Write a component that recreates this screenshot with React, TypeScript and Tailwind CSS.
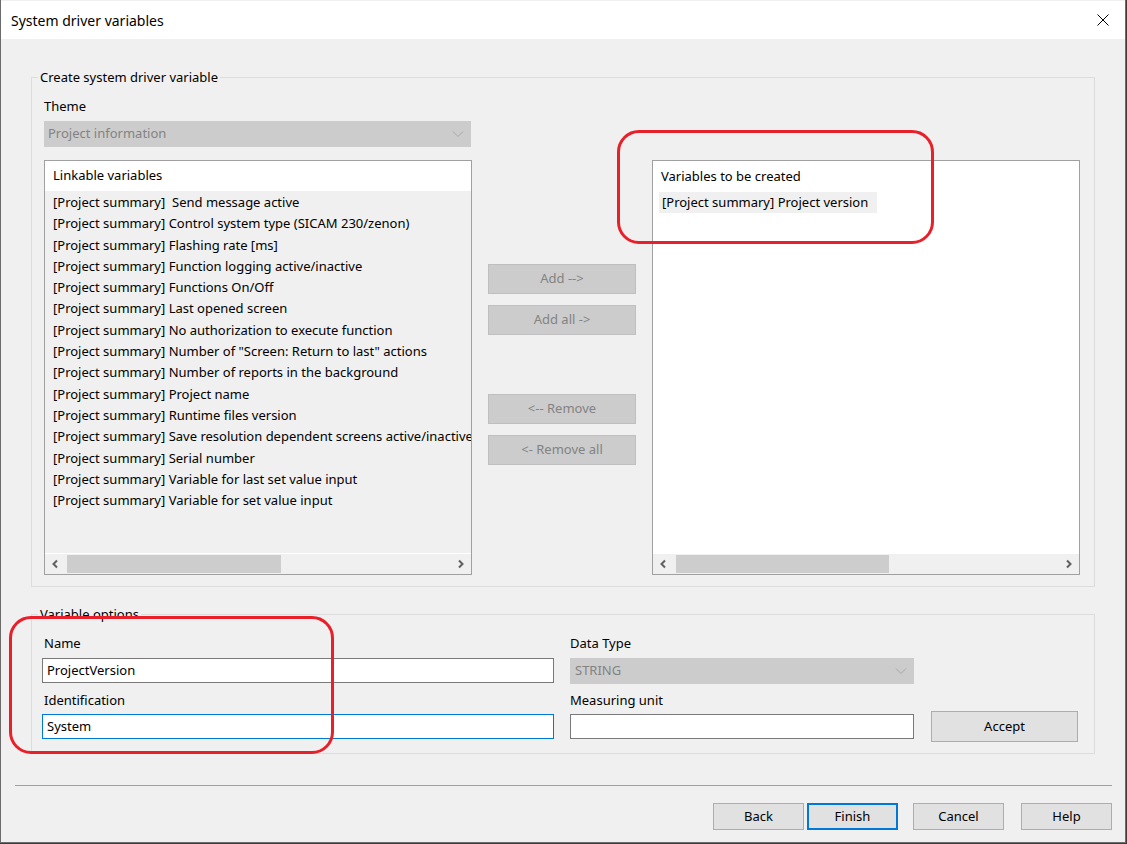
import React from "react";

const linkable = [
  "[Project summary]  Send message active",
  "[Project summary] Control system type (SICAM 230/zenon)",
  "[Project summary] Flashing rate [ms]",
  "[Project summary] Function logging active/inactive",
  "[Project summary] Functions On/Off",
  "[Project summary] Last opened screen",
  "[Project summary] No authorization to execute function",
  '[Project summary] Number of "Screen: Return to last" actions',
  "[Project summary] Number of reports in the background",
  "[Project summary] Project name",
  "[Project summary] Runtime files version",
  "[Project summary] Save resolution dependent screens active/inactive",
  "[Project summary] Serial number",
  "[Project summary] Variable for last set value input",
  "[Project summary] Variable for set value input",
];

function Chevron({ className = "" }: { className?: string }) {
  return (
    <svg viewBox="0 0 12 8" className={className} fill="none" stroke="currentColor" strokeWidth={1}>
      <path d="M1 1.5l5 5 5-5" />
    </svg>
  );
}

function ScrollArrow({ dir }: { dir: "left" | "right" }) {
  return (
    <svg viewBox="0 0 8 10" className="h-[10px] w-[8px] text-[#606060]" fill="none" stroke="currentColor" strokeWidth={2}>
      {dir === "left" ? <path d="M6 1.5L2.5 5 6 8.5" /> : <path d="M2 1.5L5.5 5 2 8.5" />}
    </svg>
  );
}

function HScrollbar({ thumbLeft, thumbWidth }: { thumbLeft: number; thumbWidth: number }) {
  return (
    <div className="flex h-[20px] items-center bg-[#f0f0f0] px-[6px]">
      <ScrollArrow dir="left" />
      <div className="relative h-full flex-1">
        <div
          className="absolute top-[1px] bottom-[1px] bg-[#cdcdcd]"
          style={{ left: thumbLeft, width: thumbWidth }}
        />
      </div>
      <ScrollArrow dir="right" />
    </div>
  );
}

function DisabledButton({ label }: { label: string }) {
  return (
    <div className="flex h-[30px] items-center justify-center border border-[#bfbfbf] bg-[#cccccc] text-[#838383]">
      {label}
    </div>
  );
}

function Button({ label, focused = false, className = "" }: { label: string; focused?: boolean; className?: string }) {
  return (
    <div
      className={`flex items-center justify-center bg-[#e1e1e1] text-black ${
        focused ? "border-2 border-[#0078d7]" : "border border-[#adadad]"
      } ${className}`}
    >
      {label}
    </div>
  );
}

function RedMark({ className }: { className: string }) {
  return <div className={`pointer-events-none absolute rounded-[22px] border-[3.5px] border-[#e8202a] ${className}`} />;
}

export default function App() {
  return (
    <div
      className="relative h-[844px] w-[1127px] overflow-hidden bg-[#3c3c3c] text-[13px] text-black"
      style={{ fontFamily: '"Noto Sans", sans-serif' }}
    >
      <div className="flex h-[843px] w-[1126px] flex-col border-x border-b border-[#6b6b6b] bg-[#f0f0f0] pt-[1px]">
        {/* title bar */}
        <div className="flex h-[38px] shrink-0 items-center justify-between bg-white pl-[10px] pr-[16px]">
          <span className="text-[14px]">System driver variables</span>
          <svg viewBox="0 0 12 12" className="h-[12px] w-[12px]" fill="none" stroke="black" strokeWidth={1}>
            <path d="M0.5 0.5l11 11M11.5 0.5l-11 11" />
          </svg>
        </div>

        <div className="flex flex-1 flex-col px-[30px] pt-[30px]">
          {/* Create system driver variable */}
          <fieldset className="h-[518px] border border-[#dcdcdc] pl-[12px] pr-[13px]">
            <legend className="ml-[-6px] px-[2px] leading-[16px]">Create system driver variable</legend>
            <div className="mt-[12px] leading-[18px]">Theme</div>
            <div className="mt-[6px] flex h-[26px] w-[427px] items-center justify-between border border-[#cccccc] bg-[#cccccc] pl-[3px] pr-[6px] text-[#838383]">
              <span>Project information</span>
              <Chevron className="h-[8px] w-[12px] text-[#a8a8a8]" />
            </div>

            <div className="mt-[13px] flex">
              {/* linkable list */}
              <div className="flex h-[415px] w-[428px] flex-col border border-[#a0a0a0] bg-[#f0f0f0]">
                <div className="flex h-[30px] shrink-0 items-center bg-white pl-[8px]">Linkable variables</div>
                <div className="flex-1 overflow-hidden whitespace-pre pl-[8px] pt-[1px]">
                  {linkable.map((l) => (
                    <div key={l} className="h-[21.3px] leading-[21.3px]">
                      {l}
                    </div>
                  ))}
                </div>
                <div className="h-[1px] bg-white" />
                <HScrollbar thumbLeft={8} thumbWidth={214} />
              </div>

              {/* middle buttons */}
              <div className="ml-[16px] flex w-[148px] flex-col pt-[104px]">
                <DisabledButton label="Add -->" />
                <div className="mt-[11px]">
                  <DisabledButton label="Add all ->" />
                </div>
                <div className="mt-[59px]">
                  <DisabledButton label="<-- Remove" />
                </div>
                <div className="mt-[11px]">
                  <DisabledButton label="<- Remove all" />
                </div>
              </div>

              {/* variables to be created */}
              <div className="ml-[16px] flex h-[415px] w-[428px] flex-col border border-[#a0a0a0] bg-white">
                <div className="flex h-[30px] shrink-0 items-center pl-[8px] pt-[1px]">Variables to be created</div>
                <div className="flex-1 pl-[6px] pt-[1px]">
                  <div className="inline-block h-[21px] bg-[#f0f0f0] pl-[3px] pr-[9px] leading-[21px]">
                    [Project summary] Project version
                  </div>
                </div>
                <HScrollbar thumbLeft={9} thumbWidth={213} />
              </div>
            </div>
          </fieldset>

          {/* Variable options */}
          <fieldset className="mt-[19px] h-[148px] border border-[#dcdcdc] pl-[10px] pr-[14px]">
            <legend className="ml-[-4px] px-[2px] leading-[16px]">Variable options</legend>
            <div className="mt-[12px] flex items-end">
              <div className="flex w-[512px] flex-col">
                <div className="pl-[2px] leading-[18px]">Name</div>
                <div className="mt-[6px] flex h-[25px] items-center border border-[#7a7a7a] bg-white pl-[4px]">ProjectVersion</div>
                <div className="mt-[8px] pl-[2px] leading-[18px]">Identification</div>
                <div className="mt-[5px] flex h-[25px] items-center border border-[#0078d7] bg-white pl-[4px]">System</div>
              </div>
              <div className="ml-[16px] flex w-[344px] flex-col">
                <div className="leading-[18px]">Data Type</div>
                <div className="mt-[6px] flex h-[26px] items-center justify-between border border-[#cccccc] bg-[#cccccc] pl-[4px] pr-[6px] text-[#838383]">
                  <span>STRING</span>
                  <Chevron className="h-[8px] w-[12px] text-[#a8a8a8]" />
                </div>
                <div className="mt-[7px] leading-[18px]">Measuring unit</div>
                <div className="mt-[5px] h-[25px] border border-[#7a7a7a] bg-white" />
              </div>
              <Button label="Accept" className="mb-[-3px] ml-[17px] h-[31px] w-[147px]" />
            </div>
          </fieldset>

          {/* separator */}
          <div className="mt-[31px] -ml-[16px] -mr-[17px] h-[2px] border-t border-[#a0a0a0] border-b-white" />

          <div className="mt-[16px] -mr-[17px] flex justify-end">
            <Button label="Back" className="h-[27px] w-[91px]" />
            <Button label="Finish" focused className="ml-[3px] h-[27px] w-[91px]" />
            <Button label="Cancel" className="ml-[15px] h-[27px] w-[91px]" />
            <Button label="Help" className="ml-[17px] h-[27px] w-[91px]" />
          </div>
        </div>
      </div>

      {/* annotation marks */}
      <RedMark className="left-[617px] top-[130px] h-[114px] w-[317px]" />
      <RedMark className="left-[9px] top-[616px] h-[138px] w-[325px]" />
    </div>
  );
}
